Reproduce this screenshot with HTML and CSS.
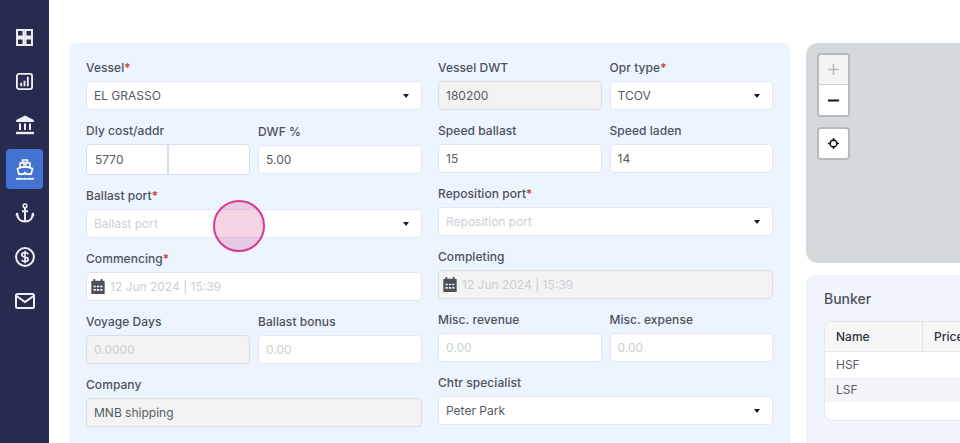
FILE: index.html
```html
<!DOCTYPE html>
<html lang="en">
<head>
<meta charset="utf-8">
<title>Voyage estimate</title>
<link rel="stylesheet" href="styles.css">
</head>
<body>
<div class="app">
  <nav class="sidebar">
    <a class="nav-item"><svg viewBox="0 0 20 20" class="ico ico-sm"><path d="M1.200 1.200h7.600v7.600H1.200zM11.200 1.200h7.600v7.600h-7.600zM1.200 11.200h7.600v7.600H1.200zM11.200 11.200h7.600v7.600h-7.600z" fill="none" stroke="currentColor" stroke-width="2.300"/></svg></a>
    <a class="nav-item"><svg viewBox="0 0 20 20" class="ico ico-sm"><rect x="1.100" y="1.100" width="17.800" height="17.800" rx="2.500" fill="none" stroke="currentColor" stroke-width="2.200"/><path d="M5 11.500h2.200V15.500H5zM8.900 9h2.200v6.500H8.900zM12.800 4.500h2.200v11h-2.200z" fill="currentColor"/></svg></a>
    <a class="nav-item"><svg viewBox="0 0 20 20" class="ico"><path d="M10 .5 1.200 5v2h17.600V5z" fill="currentColor"/><path d="M5 8.500v6.500M10 8.500v6.500M15 8.500v6.500" stroke="currentColor" stroke-width="2" fill="none"/><path d="M1 16.800h18v2.400H1z" fill="currentColor"/></svg></a>
    <a class="nav-item active"><svg viewBox="0 0 20 21" class="ico ico-tall"><path d="M7.500 1h5v2.500h-5zM5 4h10v4H5z" fill="none" stroke="currentColor" stroke-width="1.600"/><path d="M2.500 9.500 10 7.500l7.500 2-1.300 5.500H3.800z" fill="none" stroke="currentColor" stroke-width="1.700"/><path d="M8 5.800h4" stroke="currentColor" stroke-width="1.300"/><path d="M3.500 14.500c1.800 1.300 4.500 1.300 6.500-1 2 2.300 4.700 2.300 6.500 1" fill="none" stroke="currentColor" stroke-width="1.500"/><path d="M1 19.500c1.600.8 3 .8 4.500 0 1.500.8 3 .8 4.500 0 1.500.8 3 .8 4.500 0 1.500.8 2.900.8 4.500 0" fill="none" stroke="currentColor" stroke-width="1.500"/></svg></a>
    <a class="nav-item"><svg viewBox="0 0 20 20" class="ico"><circle cx="10" cy="2.800" r="1.900" fill="none" stroke="currentColor" stroke-width="1.500"/><path d="M10 5v13.500M7 8.300h6" stroke="currentColor" stroke-width="2" fill="none"/><path d="M2 10c0 5.500 3.500 8.500 8 8.500s8-3 8-8.500" fill="none" stroke="currentColor" stroke-width="2.200"/><path d="M.3 12.500 2 9.500l1.700 3z M16.300 12.500l1.700-3 1.700 3z" fill="currentColor"/></svg></a>
    <a class="nav-item"><svg viewBox="0 0 20 20" class="ico"><circle cx="10" cy="10" r="8.900" fill="none" stroke="currentColor" stroke-width="2"/><path d="M13.200 7.300C12.600 6 11.400 5.600 10 5.600c-1.900 0-3.200.9-3.200 2.300 0 3.100 6.400 1.200 6.400 4.300 0 1.400-1.400 2.300-3.200 2.300-1.500 0-2.700-.5-3.300-1.700M10 3.800v12.400" fill="none" stroke="currentColor" stroke-width="1.700"/></svg></a>
    <a class="nav-item"><svg viewBox="0 0 20 16" class="ico ico-wide"><rect x="1" y="1" width="18" height="14" rx="1.500" fill="none" stroke="currentColor" stroke-width="2"/><path d="m1.500 3 8.500 6 8.500-6" fill="none" stroke="currentColor" stroke-width="2"/></svg></a>
  </nav>
  <main class="main">
    <section class="form-panel">
      <div class="col">
        <div class="field"><label class="lbl">Vessel<span class="req">*</span></label><div class="input select"><span>EL GRASSO</span><i class="caret"></i></div></div>
        <div class="pair">
          <div class="field"><label class="lbl">Dly cost/addr</label>
            <div class="group"><div class="cell first">5770</div><div class="cell"></div></div>
          </div>
          <div class="field"><label class="lbl lbl-low">DWF %</label><div class="input">5.00</div></div>
        </div>
        <div class="field"><label class="lbl">Ballast port<span class="req">*</span></label><div class="input select"><span class="ph">Ballast port</span><i class="caret"></i></div></div>
        <div class="field"><label class="lbl">Commencing<span class="req">*</span></label><div class="input date">
          <svg viewBox="1 1 12 13.500" class="cal"><path d="M1 3.500a1 1 0 0 1 1-1h1V1h1.500v1.500h5V1H11v1.500h1a1 1 0 0 1 1 1V14a.500.500 0 0 1-.500.500h-11A.500.500 0 0 1 1 14z" fill="#4b4f58"/><path d="M3 7h2v1.500H3zM6 7h2v1.500H6zM9 7h2v1.500H9zM3 10h2v1.500H3zM6 10h2v1.500H6zM9 10h2v1.500H9z" fill="#fff"/></svg>
          <span class="ph">12 Jun 2024 | 15:39</span></div></div>
        <div class="pair">
          <div class="field"><label class="lbl">Voyage Days</label><div class="input off"><span class="ph">0.0000</span></div></div>
          <div class="field"><label class="lbl">Ballast bonus</label><div class="input"><span class="ph">0.00</span></div></div>
        </div>
        <div class="field"><label class="lbl">Company</label><div class="input off">MNB shipping</div></div>
      </div>
      <div class="col">
        <div class="pair">
          <div class="field"><label class="lbl">Vessel DWT</label><div class="input off">180200</div></div>
          <div class="field"><label class="lbl">Opr type<span class="req">*</span></label><div class="input select"><span>TCOV</span><i class="caret"></i></div></div>
        </div>
        <div class="pair">
          <div class="field"><label class="lbl">Speed ballast</label><div class="input">15</div></div>
          <div class="field"><label class="lbl">Speed laden</label><div class="input">14</div></div>
        </div>
        <div class="field"><label class="lbl">Reposition port<span class="req">*</span></label><div class="input select"><span class="ph">Reposition port</span><i class="caret"></i></div></div>
        <div class="field"><label class="lbl">Completing</label><div class="input off date">
          <svg viewBox="1 1 12 13.500" class="cal"><path d="M1 3.500a1 1 0 0 1 1-1h1V1h1.500v1.500h5V1H11v1.500h1a1 1 0 0 1 1 1V14a.500.500 0 0 1-.500.500h-11A.500.500 0 0 1 1 14z" fill="#4b4f58"/><path d="M3 7h2v1.500H3zM6 7h2v1.500H6zM9 7h2v1.500H9zM3 10h2v1.500H3zM6 10h2v1.500H6zM9 10h2v1.500H9z" fill="#f3f3f3"/></svg>
          <span class="ph">12 Jun 2024 | 15:39</span></div></div>
        <div class="pair">
          <div class="field"><label class="lbl">Misc. revenue</label><div class="input"><span class="ph">0.00</span></div></div>
          <div class="field"><label class="lbl">Misc. expense</label><div class="input"><span class="ph">0.00</span></div></div>
        </div>
        <div class="field"><label class="lbl">Chtr specialist</label><div class="input select"><span>Peter Park</span><i class="caret"></i></div></div>
      </div>
    </section>
    <aside class="side">
      <div class="map">
        <div class="zoom">
          <button class="zbtn zdis"><svg viewBox="0 0 14 14" class="zi"><path d="M7 1v12M1 7h12" stroke="currentColor" stroke-width="1.800" fill="none"/></svg></button>
          <button class="zbtn"><svg viewBox="0 0 14 14" class="zi"><path d="M1 7h12" stroke="currentColor" stroke-width="2" fill="none"/></svg></button>
        </div>
        <button class="locate"><svg viewBox="0 0 12 12" class="li"><circle cx="6" cy="6" r="3.700" fill="none" stroke="currentColor" stroke-width="1.700"/><path d="M6 0v3.500M6 8.500V12M0 6h3.500M8.500 6H12" stroke="currentColor" stroke-width="1.500"/></svg></button>
      </div>
      <div class="bunker">
        <h2 class="bunker-title">Bunker</h2>
        <div class="table">
          <div class="thead"><div class="th name">Name</div><div class="th">Price</div></div>
          <div class="tr">HSF</div>
          <div class="tr alt">LSF</div>
        </div>
      </div>
    </aside>
  </main>
</div>
<div class="touch"></div>
</body>
</html>
```
FILE: styles.css
```css
* { box-sizing: border-box; }
html, body { margin: 0; height: 100%; overflow: hidden; background: #fff; }
body { font-family: Inter, "Liberation Sans", sans-serif; color: #495057; }
.app { display: flex; height: 443px; width: 960px; overflow: hidden; }

.sidebar { width: 49px; flex: none; background: #272b4f; display: flex; flex-direction: column; align-items: center; gap: 4px; padding-top: 17px; }
.nav-item { width: 37px; height: 40px; border-radius: 4px; display: flex; align-items: center; justify-content: center; color: #eef0f4; }
.nav-item.active { background: #4472d0; color: #fff; }
.ico { width: 20px; height: 20px; display: block; }
.ico-sm { width: 17px; height: 17px; }
.ico-tall { height: 21px; }
.ico-wide { height: 16px; }

.main { flex: 1; min-width: 0; display: flex; gap: 16px; padding: 43px 0 0 20px; }

.form-panel { width: 721px; flex: none; height: 420px; background: #ecf4ff; border-radius: 8px; padding: 14px 17px 0; display: grid; grid-template-columns: 336px 335px; column-gap: 16px; align-items: start; }
.col { display: flex; flex-direction: column; gap: 10px; }
.pair { display: grid; grid-template-columns: 1fr 1fr; column-gap: 8px; }
.field { display: flex; flex-direction: column; min-width: 0; }
.lbl { font-size: 12px; font-weight: 500; line-height: 22px; height: 20px; margin-bottom: 4px; color: #4d5259; letter-spacing: .06px; white-space: nowrap; }
.lbl-low { margin-top: 1px; margin-bottom: 4px; }
.req { color: #c9362f; }
.input { height: 29px; background: #fff; border: 1px solid #e3e8f0; border-radius: 4px; padding: 0 7px; display: flex; align-items: center; font-size: 12px; color: #565b62; white-space: nowrap; }
.select { justify-content: space-between; padding-right: 12px; }
.off { background: #f3f3f3; border-color: #dcdee2; }
.date { padding-left: 4px; gap: 5px; }
.ph { color: #cbcfd5; }
.caret { display: block; width: 0; height: 0; border-left: 3.500px solid transparent; border-right: 3.500px solid transparent; border-top: 4px solid #16181c; margin-top: 1px; }
.cal { width: 14px; height: 15px; flex: none; }

.group { height: 31px; display: grid; grid-template-columns: 82px 1fr; background: #fff; border: 1px solid #d7dde9; border-radius: 4px; }
.cell { display: flex; align-items: center; padding: 0 8px; font-size: 12px; color: #565b62; }
.first { border-right: 2px solid #d7dde9; }

.side { flex: 1; min-width: 0; display: flex; flex-direction: column; gap: 12px; }
.map { height: 220px; width: 180px; background: #d4d9dc; border-radius: 12px 0 0 12px; padding: 10px 11px; display: flex; flex-direction: column; align-items: flex-start; gap: 10px; }
.zoom { width: 33px; background: #fff; border: 2px solid #b6babd; border-radius: 4px; overflow: hidden; display: flex; flex-direction: column; }
.zbtn { width: 100%; height: 30px; border: 0; padding: 0; background: #fff; color: #16181c; display: flex; align-items: center; justify-content: center; }
.zdis { background: #f4f4f4; color: #bbbbbb; border-bottom: 1px solid #ccc; }
.zi { width: 13px; height: 13px; }
.locate { width: 33px; height: 33px; border: 2px solid #b6babd; border-radius: 4px; background: #fff; color: #16181c; display: flex; align-items: center; justify-content: center; padding: 0; }
.li { width: 11px; height: 11px; }

.bunker { flex: 1; width: 180px; background: #f0f4fd; border-radius: 8px 0 0 0; padding: 14px 0 0 18px; }
.bunker-title { margin: 0 0 12px; font-size: 14px; line-height: 20px; font-weight: 500; color: #4d5259; }
.table { width: 162px; height: 100px; background: #fff; border: 1px solid #e6e8ee; border-right: 0; border-radius: 8px 0 0 8px; overflow: hidden; font-size: 12px; }
.thead { display: grid; grid-template-columns: 98px 1fr; height: 30px; background: #f7f7f8; border-bottom: 1px solid #e8e8ea; }
.th { display: flex; align-items: center; padding-left: 11px; font-weight: 500; color: #2f3238; white-space: nowrap; }
.name { border-right: 1px solid #e2e2e4; }
.tr { height: 25px; display: flex; align-items: center; padding-left: 11px; color: #5b6067; }
.alt { background: #f4f4f9; }

.touch { position: absolute; left: 213px; top: 200px; width: 52px; height: 52px; border-radius: 50%; background: rgba(205, 40, 115, .2); border: 2px solid #d93a8f; }
```
